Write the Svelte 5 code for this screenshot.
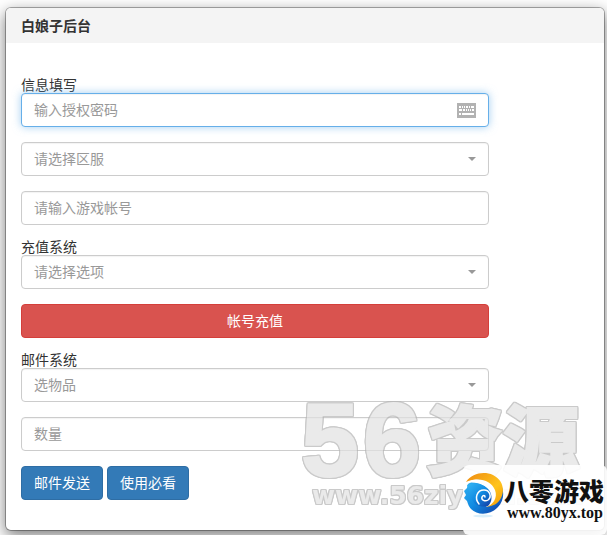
<script lang="ts">
	let password = $state('');
	let server = $state('');
	let account = $state('');
	let charge = $state('');
	let item = $state('');
	let amount = $state('');
</script>

<div class="page">
	<main class="modal">
		<header class="modal-header">
			<h1>白娘子后台</h1>
		</header>

		<form class="modal-body" onsubmit={(e) => e.preventDefault()}>
			<section>
				<h2>信息填写</h2>
				<div class="field">
					<input
						class="control active"
						type="text"
						aria-label="输入授权密码"
						placeholder="输入授权密码"
						bind:value={password}
					/>
					<svg class="keyboard" viewBox="0 0 19 15" aria-hidden="true">
						<path fill="#b2b2b2" d="M0 0h19v15H0z" />
						<path
							fill="#fff"
							d="M2 3h2v2H2zM5 3h1v2H5zM7 3h1v2H7zM9 3h2v2H9zM12 3h1v2h-1zM14 3h3v2h-3zM2 6h3v2H2zM6 6h2v2H6zM9 6h1v2H9zM11 6h1v2h-1zM13 6h1v2h-1zM15 6h2v2h-2zM2 10h2v2H2zM5 10h12v2H5z"
						/>
					</svg>
				</div>
				<div class="field">
					<select class="control" aria-label="请选择区服" bind:value={server}>
						<option value="">请选择区服</option>
					</select>
					<span class="caret"></span>
				</div>
				<div class="field">
					<input
						class="control"
						type="text"
						aria-label="请输入游戏帐号"
						placeholder="请输入游戏帐号"
						bind:value={account}
					/>
				</div>
			</section>

			<section>
				<h2>充值系统</h2>
				<div class="field">
					<select class="control" aria-label="请选择选项" bind:value={charge}>
						<option value="">请选择选项</option>
					</select>
					<span class="caret"></span>
				</div>
				<button class="btn danger" type="button">帐号充值</button>
			</section>

			<section>
				<h2>邮件系统</h2>
				<div class="field">
					<select class="control" aria-label="选物品" bind:value={item}>
						<option value="">选物品</option>
					</select>
					<span class="caret"></span>
				</div>
				<div class="field">
					<input
						class="control"
						type="text"
						aria-label="数量"
						placeholder="数量"
						bind:value={amount}
					/>
				</div>
				<div class="actions">
					<button class="btn primary" type="submit">邮件发送</button>
					<button class="btn primary" type="button">使用必看</button>
				</div>
			</section>
		</form>
	</main>

	<svg class="watermark" viewBox="0 0 303 120">
		<text class="wm-num" x="-3" y="81">5</text>
		<text class="wm-num" x="59" y="81">6</text>
		<text class="wm-cjk" x="123" y="74">资源</text>
		<text class="wm-url" x="8" y="109">www.56ziyuan.com</text>
	</svg>

	<aside class="brand">
		<svg class="swirl" viewBox="0 0 40 46" aria-hidden="true">
			<defs>
				<linearGradient id="sea" x1="0" y1="0" x2="1" y2="1">
					<stop offset="0" stop-color="#35b6f4" />
					<stop offset="0.5" stop-color="#118be2" />
					<stop offset="1" stop-color="#1238a0" />
				</linearGradient>
				<linearGradient id="sun" x1="0" y1="0" x2="1" y2="1">
					<stop offset="0" stop-color="#ee8a12" />
					<stop offset="0.6" stop-color="#ffc41c" />
					<stop offset="1" stop-color="#f59a08" />
				</linearGradient>
			</defs>
			<ellipse cx="19" cy="43" rx="10" ry="1.5" fill="#d9effb" />
			<path
				fill="url(#sea)"
				d="M4 11C8 8 14 6 20 5l16 5c5 8 4 18-2 24-7 8-20 9-27 2-2-2-3-5-4-8l-3-3 2-3-2-4 3-3z"
			/>
			<path
				fill="url(#sun)"
				d="M2 9C8 0 20-2 29 2c10 5 12 15 8 23-3 6-8 8-15 9 7-4 10-10 8-16C27 8 13 3 2 9z"
			/>
			<path
				fill="#fff"
				d="M2 10C13 3 27 7 31 17c3 8-2 15-9 17 3-4 5-8 4-13C24 13 14 8 2 10z"
			/>
			<path
				fill="url(#sea)"
				d="M3 12c8-3 17-1 22 5 4 6 3 12-1 16-7 2-14-1-16-7z"
			/>
			<path
				fill="none"
				stroke="#fff"
				stroke-width="1.5"
				stroke-linecap="round"
				d="M15 31c-5-6-2-14 5-14 6 0 8 7 4 10-3 2-7 0-6-3 1-2 3-2 3 0"
			/>
		</svg>
		<div class="brand-text">
			<strong>八零游戏</strong>
			<span>www.80yx.top</span>
		</div>
	</aside>
</div>

<style>
	:global(body) {
		margin: 0;
		background: #fff;
	}

	.page {
		position: relative;
		overflow: hidden;
		padding: 7px 2px 4px 5px;
		font-family: 'Liberation Sans', 'Noto Sans CJK SC', sans-serif;
		font-size: 14px;
		line-height: 20px;
		color: #333;
	}

	.modal {
		background: #fff;
		border: 1px solid rgba(0, 0, 0, 0.3);
		border-radius: 6px;
		background-clip: padding-box;
		box-shadow: 0 5px 15px rgba(0, 0, 0, 0.5);
	}

	.modal-header {
		padding: 8px 15px 7px;
		background: #f4f4f4;
		border-radius: 5px 5px 0 0;
	}

	h1 {
		margin: 0;
		font-size: 14px;
		line-height: 20px;
		font-weight: 700;
	}

	.modal-body {
		display: flex;
		flex-direction: column;
		gap: 15px;
		padding: 35px 115px 30px 15px;
	}

	section {
		display: flex;
		flex-direction: column;
		gap: 15px;
	}

	h2 {
		margin: 0 0 -15px;
		font-size: 14px;
		line-height: 15px;
		font-weight: 400;
	}

	.field {
		position: relative;
	}

	.control {
		display: block;
		box-sizing: border-box;
		width: 100%;
		height: 34px;
		padding: 6px 12px;
		border: 1px solid #ccc;
		border-radius: 4px;
		background: #fff;
		box-shadow: inset 0 1px 1px rgba(0, 0, 0, 0.05);
		font: inherit;
		color: #999;
		appearance: none;
		outline: none;
	}

	.control::placeholder {
		color: #999;
		opacity: 1;
	}

	.control.active,
	.control:focus {
		border-color: #66afe9;
		box-shadow:
			inset 0 1px 1px rgba(0, 0, 0, 0.05),
			0 0 8px rgba(102, 175, 233, 0.6);
	}

	.keyboard {
		position: absolute;
		top: 10px;
		right: 13px;
		width: 19px;
		height: 15px;
	}

	.caret {
		position: absolute;
		top: 15px;
		right: 13px;
		border-top: 4px solid #999;
		border-left: 4px solid transparent;
		border-right: 4px solid transparent;
		pointer-events: none;
	}

	.btn {
		height: 34px;
		padding: 6px 12px;
		border: 1px solid;
		border-radius: 4px;
		font: inherit;
		color: #fff;
		cursor: pointer;
	}

	.danger {
		background: #d9534f;
		border-color: #d43f3a;
	}

	.primary {
		background: #337ab7;
		border-color: #2e6da4;
	}

	.actions {
		display: flex;
		gap: 4px;
	}

	.watermark {
		position: absolute;
		right: 0;
		bottom: 20px;
		width: 303px;
		height: 120px;
		overflow: visible;
		opacity: 0.7;
		pointer-events: none;
		fill: #e2e2e2;
		stroke: #e2e2e2;
		stroke-width: 2px;
		filter: drop-shadow(1px 0 0 #b4b4b4) drop-shadow(-1px 0 0 #b4b4b4)
			drop-shadow(0 1px 0 #b4b4b4) drop-shadow(0 -1px 0 #b4b4b4);
	}

	.wm-num {
		font: 700 104px 'Liberation Sans', sans-serif;
	}

	.wm-cjk {
		font: 900 76px 'Noto Sans CJK SC', sans-serif;
	}

	.wm-url {
		font: 700 25px 'DejaVu Sans', sans-serif;
		stroke-width: 0;
	}

	.brand {
		position: absolute;
		right: 0;
		bottom: 0;
		display: flex;
		box-sizing: border-box;
		width: 144px;
		height: 70px;
		padding: 8px 0 0 1px;
		border-radius: 6px;
		background: rgba(255, 255, 255, 0.9);
		color: #111;
	}

	.swirl {
		flex: none;
		width: 40px;
		height: 46px;
	}

	.brand-text {
		display: flex;
		flex-direction: column;
		white-space: nowrap;
	}

	.brand-text strong {
		padding-top: 2px;
		font: 900 25px/30px 'Noto Sans CJK SC', sans-serif;
	}

	.brand-text span {
		padding-left: 3px;
		font: 700 16px/16px 'Liberation Serif', serif;
	}
</style>
